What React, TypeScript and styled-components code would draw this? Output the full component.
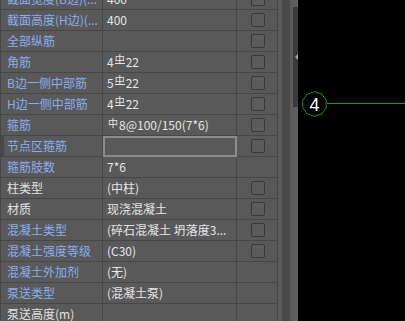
import React from 'react';
import styled, { createGlobalStyle } from 'styled-components';

const Global = createGlobalStyle`
  html, body { margin: 0; padding: 0; background: #000; }
  body { font-family: "Noto Sans CJK SC", "Microsoft YaHei", "Noto Sans", sans-serif; }
`;

const Screen = styled.div`
  display: flex;
  width: 405px;
  height: 321px;
  overflow: hidden;
  background: #000;
`;

const Panel = styled.div`
  box-sizing: border-box;
  width: 278px;
  flex: none;
  height: 100%;
  overflow: hidden;
  background: #595959;
  border-left: 1px solid #474747;
`;

const Grid = styled.div`
  display: grid;
  grid-template-columns: 102px 134px 41px;
  grid-auto-rows: 21px;
  margin-top: -11px;
`;

const Cell = styled.div`
  box-sizing: border-box;
  display: flex;
  align-items: center;
  border-right: 1px solid #474747;
  border-bottom: 1px solid #474747;
  white-space: nowrap;
  overflow: hidden;
  font-size: 12px;
  line-height: 20px;
`;

const LabelCell = styled(Cell)<{ $blue: boolean; $marker?: boolean }>`
  padding-left: 6px;
  color: ${(p) => (p.$blue ? '#88aef2' : '#e2e2e2')};
  box-shadow: ${(p) => (p.$marker ? 'inset 3px 0 0 #484848' : 'none')};
`;

const ValueCell = styled(Cell)<{ $editing?: boolean }>`
  padding-left: 4px;
  color: #e6e6e6;
  ${(p) =>
    p.$editing
      ? `border-right-color: #8c8c8c; border-bottom-color: #8c8c8c;
         box-shadow: inset 2px 2px 0 #8c8c8c, inset -1px -1px 0 #8c8c8c;`
      : ''}
`;

const CheckCell = styled(Cell)`
  justify-content: center;
  padding-left: 1px;
`;

const Checkbox = styled.div`
  box-sizing: border-box;
  width: 14px;
  height: 14px;
  border: 1px solid #383838;
  border-radius: 2px;
  background: #5c5c5c;
`;

const Rebar = styled.span<{ $grade: 'hrb' | 'hpb' }>`
  display: inline-block;
  font-size: 10px;
  line-height: 9px;
  margin: 0 1px;
  position: relative;
  top: -3px;
  ${(p) => (p.$grade === 'hrb' ? 'border-bottom: 1px solid #e6e6e6;' : '')}
`;

const Splitter = styled.div`
  display: flex;
  flex: none;
  height: 100%;
`;

const Strip = styled.div<{ $w: number; $c: string }>`
  width: ${(p) => p.$w}px;
  background: ${(p) => p.$c};
`;

const Handle = styled.div`
  width: 5px;
  background: #5e5e5e;
  display: flex;
  flex-direction: column;
  padding-top: 7px;
`;

const HandleBar = styled.div`
  height: 100px;
  background: #3b3b3b;
  display: flex;
  align-items: center;
  justify-content: flex-end;
`;

const Arrow = styled.div`
  width: 0;
  height: 0;
  border-top: 3px solid transparent;
  border-bottom: 3px solid transparent;
  border-right: 3px solid #a8a8a8;
`;

const Canvas = styled.div`
  flex: 1;
  height: 100%;
  background: #000;
`;

const AxisLabel = styled.text`
  font-family: "Liberation Sans", Arial, sans-serif;
  font-size: 18px;
  fill: #ffffff;
`;

type Row = {
  label: string;
  value?: React.ReactNode;
  blue: boolean;
  check: boolean;
  editing?: boolean;
};

const hrb = <Rebar $grade="hrb">中</Rebar>;
const hpb = <Rebar $grade="hpb">中</Rebar>;

const rows: Row[] = [
  { label: '截面宽度(B边)(...', value: '400', blue: true, check: true },
  { label: '截面高度(H边)(...', value: '400', blue: true, check: true },
  { label: '全部纵筋', value: '', blue: true, check: true },
  { label: '角筋', value: <>4{hrb}22</>, blue: true, check: true },
  { label: 'B边一侧中部筋', value: <>5{hrb}22</>, blue: true, check: true },
  { label: 'H边一侧中部筋', value: <>4{hrb}22</>, blue: true, check: true },
  { label: '箍筋', value: <>{hpb}8@100/150(7*6)</>, blue: true, check: true },
  { label: '节点区箍筋', value: '', blue: true, check: true, editing: true },
  { label: '箍筋肢数', value: '7*6', blue: true, check: false },
  { label: '柱类型', value: '(中柱)', blue: false, check: true },
  { label: '材质', value: '现浇混凝土', blue: false, check: true },
  { label: '混凝土类型', value: '(碎石混凝土 坍落度3...', blue: true, check: true },
  { label: '混凝土强度等级', value: '(C30)', blue: true, check: true },
  { label: '混凝土外加剂', value: '(无)', blue: true, check: false },
  { label: '泵送类型', value: '(混凝土泵)', blue: true, check: false },
  { label: '泵送高度(m)', value: '', blue: false, check: false },
];

function polygon(cx: number, cy: number, r: number, n: number) {
  const pts: string[] = [];
  for (let i = 0; i < n; i++) {
    const a = (Math.PI * 2 * i) / n + Math.PI / n;
    pts.push(`${(cx + r * Math.cos(a)).toFixed(2)},${(cy + r * Math.sin(a)).toFixed(2)}`);
  }
  return pts.join(' ');
}

export default function App() {
  return (
    <>
      <Global />
      <Screen>
        <Panel>
          <Grid>
            {rows.map((r, i) => (
              <React.Fragment key={i}>
                <LabelCell $blue={r.blue} $marker={r.editing}>{r.label}</LabelCell>
                <ValueCell $editing={r.editing}>{r.value}</ValueCell>
                <CheckCell>{r.check && <Checkbox />}</CheckCell>
              </React.Fragment>
            ))}
          </Grid>
        </Panel>
        <Splitter>
          <Strip $w={4} $c="#5b5b5b" />
          <Strip $w={8} $c="#4a4a4a" />
          <Strip $w={3} $c="#5b5b5b" />
          <Handle>
            <HandleBar>
              <Arrow />
            </HandleBar>
          </Handle>
        </Splitter>
        <Canvas>
          <svg width="107" height="321" viewBox="0 0 107 321">
            <rect x="29" y="103" width="78" height="1" fill="#12a012" />
            <polygon points={polygon(16.5, 104, 12.3, 10)} fill="none" stroke="#149a14" strokeWidth="1" />
            <AxisLabel x="16.5" y="110.5" textAnchor="middle">4</AxisLabel>
          </svg>
        </Canvas>
      </Screen>
    </>
  );
}
